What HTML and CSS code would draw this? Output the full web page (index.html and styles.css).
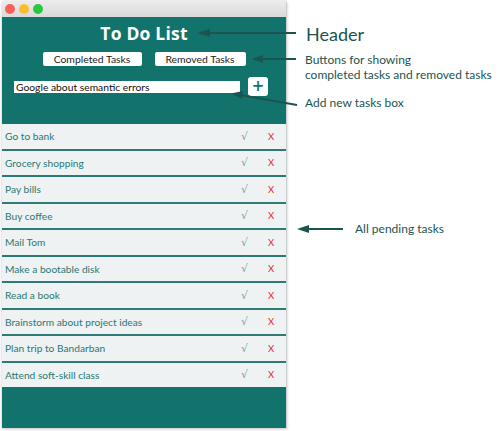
FILE: index.html
```html
<!DOCTYPE html>
<html>
<head>
<meta charset="utf-8">
<link rel="stylesheet" href="styles.css">
</head>
<body>
<div class="stage">
  <div class="window">
    <div class="titlebar">
      <span class="light red"></span>
      <span class="light yellow"></span>
      <span class="light green"></span>
    </div>
    <div class="header">
      <h1 class="title">To Do List</h1>
      <div class="buttons">
        <button class="btn btn-completed">Completed Tasks</button>
        <button class="btn btn-removed">Removed Tasks</button>
      </div>
      <div class="add-row">
        <div class="task-input">Google about semantic errors</div>
        <div class="add-btn">+</div>
      </div>
    </div>
    <ul class="tasks">
      <li class="task"><span class="name">Go to bank</span><span class="done">√</span><span class="remove">X</span></li>
      <li class="task"><span class="name">Grocery shopping</span><span class="done">√</span><span class="remove">X</span></li>
      <li class="task"><span class="name">Pay bills</span><span class="done">√</span><span class="remove">X</span></li>
      <li class="task"><span class="name">Buy coffee</span><span class="done">√</span><span class="remove">X</span></li>
      <li class="task"><span class="name">Mail Tom</span><span class="done">√</span><span class="remove">X</span></li>
      <li class="task"><span class="name">Make a bootable disk</span><span class="done">√</span><span class="remove">X</span></li>
      <li class="task"><span class="name">Read a book</span><span class="done">√</span><span class="remove">X</span></li>
      <li class="task"><span class="name">Brainstorm about project ideas</span><span class="done">√</span><span class="remove">X</span></li>
      <li class="task"><span class="name">Plan trip to Bandarban</span><span class="done">√</span><span class="remove">X</span></li>
      <li class="task"><span class="name">Attend soft-skill class</span><span class="done">√</span><span class="remove">X</span></li>
    </ul>
    <div class="footer"></div>
  </div>

  <svg class="arrows" width="500" height="431" viewBox="0 0 500 431">
    <g stroke="#1c5450" stroke-width="2" fill="none">
      <line x1="206" y1="33" x2="296" y2="33"/>
      <line x1="260" y1="59" x2="296" y2="59"/>
      <line x1="240" y1="95" x2="297" y2="105"/>
      <line x1="305" y1="229" x2="343" y2="229"/>
    </g>
    <g fill="#1c5450">
      <polygon points="197,33 210,29 210,37"/>
      <polygon points="252,59 263,55 263,63"/>
      <polygon points="231,93.5 243,91 242,99"/>
      <polygon points="297,229 309,225 309,233"/>
    </g>
  </svg>

  <div class="note note-header">Header</div>
  <div class="note note-buttons">Buttons for showing<br>completed tasks and removed tasks</div>
  <div class="note note-add">Add new tasks box</div>
  <div class="note note-pending">All pending tasks</div>
</div>
</body>
</html>
```

FILE: styles.css
```css
* { box-sizing: border-box; }
html, body { margin: 0; padding: 0; background: #ffffff; }
body { width: 500px; height: 431px; overflow: hidden; }

.stage {
  position: relative;
  width: 500px;
  height: 431px;
  padding-left: 2px;
}

.window {
  width: 285px;
  height: 428px;
  display: flex;
  flex-direction: column;
  border-right: 1px solid #c9cfcf;
  box-shadow: 0 1px 3px rgba(0,0,0,0.25);
  border-radius: 4px 4px 0 0;
  overflow: hidden;
}

.titlebar {
  height: 17px;
  flex: none;
  background: linear-gradient(#ededed, #d9d9d9);
  display: flex;
  align-items: center;
  gap: 4px;
  padding-left: 3px;
}
.light { width: 10px; height: 10px; border-radius: 50%; display: block; }
.red { background: #fc5f57; }
.yellow { background: #fdbc2e; }
.green { background: #29c840; }

.header {
  background: #12736c;
  height: 107px;
  flex: none;
  display: flex;
  flex-direction: column;
  align-items: center;
  padding-top: 5px;
}
.title {
  margin: 0;
  color: #ffffff;
  font-family: "Open Sans", sans-serif;
  font-weight: 700;
  font-size: 17.5px;
  line-height: 22px;
  letter-spacing: 0.2px;
}
.buttons {
  display: flex;
  gap: 13px;
  margin-top: 8px;
}
.btn {
  background: #ffffff;
  border: none;
  border-radius: 2px;
  height: 14px;
  padding: 0;
  font-family: Lato, sans-serif;
  font-size: 10.4px;
  line-height: 14px;
  color: #1b1b1b;
}
.btn-completed { width: 99px; }
.btn-removed { width: 91px; }

.add-row {
  align-self: stretch;
  display: flex;
  align-items: center;
  gap: 8px;
  padding-left: 12px;
  margin-top: 11px;
}
.task-input {
  width: 226px;
  height: 12px;
  background: #ffffff;
  font-family: Lato, sans-serif;
  font-size: 10.3px;
  line-height: 12px;
  color: #111111;
  padding-left: 2px;
}
.add-btn {
  width: 20px;
  height: 19px;
  background: #ffffff;
  border-radius: 3px;
  color: #12736c;
  font-family: "DejaVu Sans", sans-serif;
  font-weight: 700;
  font-size: 15px;
  line-height: 19px;
  text-align: center;
}

.tasks {
  list-style: none;
  margin: 0;
  padding: 0;
  flex: none;
}
.task {
  height: 24.5px;
  background: #eef2f3;
  display: flex;
  align-items: center;
  padding-left: 3px;
  font-family: Lato, sans-serif;
  font-size: 10.2px;
  color: #2c7872;
}
.task + .task { border-top: 2px solid #2e7b76; height: 26.5px; }
.name { flex: 1; }
.done {
  width: 10px;
  color: #7aa6a2;
  font-family: "DejaVu Sans", sans-serif;
  font-size: 11px;
  margin-right: 17px;
}
.remove {
  width: 14px;
  color: #e8262a;
  font-family: Lato, sans-serif;
  font-size: 9.5px;
  margin-right: 4px;
}

.footer {
  flex: 1;
  background: #12736c;
}

.arrows { position: absolute; left: 0; top: 0; pointer-events: none; }

.note {
  position: absolute;
  font-family: Lato, sans-serif;
  color: #1c5450;
  white-space: nowrap;
}
.note-header { left: 306px; top: 23px; font-size: 18px; }
.note-buttons { left: 305px; top: 52px; font-size: 12px; line-height: 15px; }
.note-add { left: 305px; top: 95px; font-size: 12px; }
.note-pending { left: 355px; top: 221px; font-size: 12px; }
```
